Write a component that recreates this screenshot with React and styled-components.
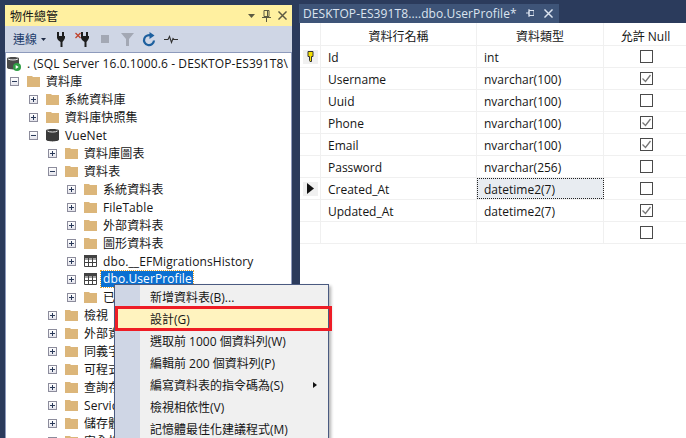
import React from "react";
import styled, { createGlobalStyle } from "styled-components";

const Global = createGlobalStyle`
  html, body { margin: 0; padding: 0; background: #2b3b5c; }
  body { font-family: "Open Sans", "Noto Sans CJK TC", sans-serif; color: #151515; }
  svg { flex: none; }
`;

const Screen = styled.div`
  width: 686px;
  height: 438px;
  display: flex;
  overflow: hidden;
  background: #2b3b5c;
`;

const LeftPanel = styled.div`
  position: relative;
  width: 287px;
  margin: 5px 0 0 5px;
  display: flex;
  flex-direction: column;
`;

const TitleBar = styled.div`
  height: 21px;
  background: #fff0a0;
  display: flex;
  align-items: center;
  padding-left: 5px;
  font-size: 12px;
`;

const TitleIcons = styled.div`
  margin-left: auto;
  display: flex;
  align-items: center;
  gap: 7px;
  padding-right: 5px;
`;

const Toolbar = styled.div`
  height: 26px;
  background: #cfd6e5;
  display: flex;
  align-items: center;
  padding-left: 8px;
  font-size: 12px;
`;

const ToolLabel = styled.span`
  color: #1c3a6b;
  margin-right: 4px;
`;

const ToolIcon = styled.svg`
  flex: none;
  margin-left: ${(p) => p.$gap}px;
`;

const Tree = styled.div`
  flex: 1;
  min-height: 0;
  background: #fff;
  border: 1px solid #8e9bbc;
  border-bottom: none;
  padding-top: 1px;
  overflow: hidden;
`;

const Row = styled.div`
  height: 18px;
  display: flex;
  align-items: center;
  padding-left: ${(p) => 4 + 19 * p.$level}px;
  white-space: nowrap;
`;

const RootRow = styled(Row)`
  padding-left: 1px;
`;

const Expander = styled.span`
  width: 9px;
  height: 9px;
  flex: none;
  box-sizing: border-box;
  border: 1px solid #8c8c9c;
  background: linear-gradient(#fff, #e4e4ec);
  margin-right: 8px;
  position: relative;
  &::before {
    content: "";
    position: absolute;
    left: 1px;
    right: 1px;
    top: 3px;
    height: 1px;
    background: #2a3a5a;
  }
  &::after {
    content: "";
    display: ${(p) => (p.$open ? "none" : "block")};
    position: absolute;
    top: 1px;
    bottom: 1px;
    left: 3px;
    width: 1px;
    background: #2a3a5a;
  }
`;

const Label = styled.span`
  font-size: 12px;
  letter-spacing: 0.1px;
  margin: 2px 0 0 5px;
  line-height: 16px;
  padding: 0 1px;
  ${(p) =>
    p.$selected &&
    `
    background: #0a70d2;
    color: #fff;
    outline: 1px dotted #e0a030;
    margin: 0 0 0 4px;
    padding: 0 1px 0 2px;
  `}
`;

const RootLabel = styled.span`
  font-size: 12px;
  letter-spacing: 0.1px;
  margin-left: 6px;
`;

const Editor = styled.div`
  flex: 1;
  margin-left: 7px;
  display: flex;
  flex-direction: column;
  min-width: 0;
`;

const TabStrip = styled.div`
  height: 19px;
  padding-top: 4px;
  display: flex;
`;

const Tab = styled.div`
  width: 260px;
  box-sizing: border-box;
  background: #3e5478;
  color: #dce4f0;
  font-size: 12px;
  letter-spacing: 0.1px;
  display: flex;
  align-items: center;
  padding-left: 4px;
  white-space: nowrap;
`;

const TabIcons = styled.div`
  margin-left: auto;
  display: flex;
  align-items: center;
  gap: 10px;
  padding-right: 6px;
`;

const Sheet = styled.div`
  flex: 1;
  background: #fff;
  margin-left: 1px;
`;

const GridRow = styled.div`
  display: grid;
  grid-template-columns: 21px 156px 127px 83px;
  height: ${(p) => (p.$head ? 23 : 22)}px;
  box-sizing: border-box;
  border-bottom: 1px solid #f0f0f0;
`;

const Cell = styled.div`
  border-right: 1px solid #f0f0f0;
  padding: 2px 0 0 7px;
  font-size: 12px;
  display: flex;
  align-items: center;
  white-space: nowrap;
`;

const HeadCell = styled(Cell)`
  justify-content: center;
  padding: 4px 0 0;
  border-right: ${(p) => (p.$last ? "none" : "1px solid #f0f0f0")};
`;

const ActiveCell = styled(Cell)`
  background: #e8ecf1;
  outline: 1px dotted #222;
  outline-offset: -1px;
`;

const MarkerCell = styled(Cell)`
  padding: 0;
  justify-content: center;
`;

const Marker = styled.span`
  width: 15px;
  height: 14px;
  background: #f0f0f0;
  display: flex;
  align-items: center;
  justify-content: center;
`;

const CheckCell = styled(Cell)`
  padding: 0 0 0 36px;
  border-right: none;
`;

const Check = styled.span`
  width: 13px;
  height: 13px;
  box-sizing: border-box;
  border: 1px solid #4a4a4a;
  display: flex;
  background: #fff;
`;

const Menu = styled.div`
  position: absolute;
  left: 109px;
  top: 279px;
  width: 215px;
  height: 160px;
  box-sizing: border-box;
  padding-top: 1px;
  background: #f0f0f0 linear-gradient(#cfd6e5, #cfd6e5) no-repeat 0 0 / 25px 100%;
  border: 1px solid #4a5a80;
  box-shadow: 2px 2px 3px rgba(0, 0, 0, 0.3);
`;

const MenuItem = styled.div`
  position: relative;
  height: 22px;
  display: flex;
  align-items: center;
  padding-left: 35px;
  font-size: 12px;
  white-space: nowrap;
  ${(p) =>
    p.$active &&
    `
    background: #fff3bf;
    &::after {
      content: "";
      position: absolute;
      left: 0;
      right: -4px;
      top: -2px;
      bottom: -1px;
      border: 3px solid #ee1c25;
    }
  `}
`;

const SubArrow = styled.span`
  position: absolute;
  right: 11px;
  top: 8px;
  border-left: 4px solid #111;
  border-top: 3.5px solid transparent;
  border-bottom: 3.5px solid transparent;
`;

const FolderIcon = () => (
  <svg width="13" height="12" viewBox="0 0 13 12">
    <path d="M0 1h5l1 1h7v10H0z" fill="#dcb67a" />
  </svg>
);

const TableIcon = () => (
  <svg width="13" height="12" viewBox="0 0 13 12">
    <path d="M0.5 0.5h12v11H0.5zM0.5 4h12M0.5 7.5h12M4.5 0.5v11M8.5 0.5v11" fill="#fff" stroke="#424242" />
    <path d="M0 0h13v3H0z" fill="#424242" />
  </svg>
);

const DbIcon = () => (
  <svg width="13" height="14" viewBox="0 0 13 14">
    <path d="M0 2.5C0 .5 13 .5 13 2.5v9c0 2.5-13 2.5-13 0z" fill="#3a3a3a" />
    <path d="M1.5 3C3 4.4 10 4.4 11.5 3" stroke="#e8e8e8" fill="none" />
  </svg>
);

const ServerIcon = () => (
  <svg width="14" height="15" viewBox="0 0 14 15">
    <path d="M0 2.5C0 .5 12 .5 12 2.5v9c0 2.5-12 2.5-12 0z" fill="#4a4a4a" />
    <path d="M1 3c2 1.3 8 1.3 10 0" stroke="#eee" fill="none" />
    <circle cx="10" cy="11" r="4" fill="#2f9e44" />
    <path d="M8.7 9v4l3-2z" fill="#fff" />
  </svg>
);

const Plug = ({ gap, x }) => (
  <ToolIcon $gap={gap} width={x ? 15 : 9} height="15" viewBox={x ? "0 0 15 15" : "6 0 9 15"}>
    {x && <path d="M0.5 1l5 5M5.5 1l-5 5" stroke="#c0432c" strokeWidth="1.3" />}
    <path d="M7 0h2v4h3V0h2v4h1v2l-1 2-1.5 2v5h-2v-5L8 8 7 6V4z" fill="#1e1e1e" transform="translate(-1 0)" />
  </ToolIcon>
);

const Pin = ({ color }) => (
  <svg width="9" height="12" viewBox="0 0 9 12">
    <path d="M2 .5h5v6H2zM5.5 1v5.500M0 7.500h9M4.500 7.500V12" stroke={color} fill="none" />
  </svg>
);

const Close = ({ color, size }) => (
  <svg width={size} height={size} viewBox="0 0 10 10">
    <path d="M.5.5l9 9M9.500.5l-9 9" stroke={color} strokeWidth="1.6" />
  </svg>
);

const treeRows = [
  { level: 0, open: true, icon: "folder", text: "資料庫" },
  { level: 1, icon: "folder", text: "系統資料庫" },
  { level: 1, icon: "folder", text: "資料庫快照集" },
  { level: 1, open: true, icon: "db", text: "VueNet" },
  { level: 2, icon: "folder", text: "資料庫圖表" },
  { level: 2, open: true, icon: "folder", text: "資料表" },
  { level: 3, icon: "folder", text: "系統資料表" },
  { level: 3, icon: "folder", text: "FileTable" },
  { level: 3, icon: "folder", text: "外部資料表" },
  { level: 3, icon: "folder", text: "圖形資料表" },
  { level: 3, icon: "table", text: "dbo.__EFMigrationsHistory" },
  { level: 3, icon: "table", text: "dbo.UserProfile", selected: true },
  { level: 3, icon: "folder", text: "已卸除的資料表" },
  { level: 2, icon: "folder", text: "檢視" },
  { level: 2, icon: "folder", text: "外部資源" },
  { level: 2, icon: "folder", text: "同義字" },
  { level: 2, icon: "folder", text: "可程式性" },
  { level: 2, icon: "folder", text: "查詢存放區" },
  { level: 2, icon: "folder", text: "Service Broker" },
  { level: 2, icon: "folder", text: "儲存體" },
  { level: 2, icon: "folder", text: "安全性" },
];

const columns = [
  { name: "Id", type: "int", key: true },
  { name: "Username", type: "nvarchar(100)", nullable: true },
  { name: "Uuid", type: "nvarchar(100)" },
  { name: "Phone", type: "nvarchar(100)", nullable: true },
  { name: "Email", type: "nvarchar(100)", nullable: true },
  { name: "Password", type: "nvarchar(256)" },
  { name: "Created_At", type: "datetime2(7)", current: true },
  { name: "Updated_At", type: "datetime2(7)", nullable: true },
  { name: "", type: "" },
];

const menuItems = [
  { text: "新增資料表(B)..." },
  { text: "設計(G)", active: true },
  { text: "選取前 1000 個資料列(W)" },
  { text: "編輯前 200 個資料列(P)" },
  { text: "編寫資料表的指令碼為(S)", sub: true },
  { text: "檢視相依性(V)" },
  { text: "記憶體最佳化建議程式(M)" },
];

const rowIcons = { folder: FolderIcon, table: TableIcon, db: DbIcon };

export default function App() {
  return (
    <Screen>
      <Global />
      <LeftPanel>
        <TitleBar>
          物件總管
          <TitleIcons>
            <svg width="7" height="4" viewBox="0 0 7 4">
              <path d="M0 0h7L3.500 4z" fill="#5c5a42" />
            </svg>
            <Pin color="#5c5a42" />
            <Close color="#5c5a42" size={9} />
          </TitleIcons>
        </TitleBar>
        <Toolbar>
          <ToolLabel>連線</ToolLabel>
          <svg width="5" height="3" viewBox="0 0 5 3">
            <path d="M0 0h5L2.500 3z" fill="#1e2a44" />
          </svg>
          <Plug gap={11} />
          <Plug gap={9} x />
          <ToolIcon $gap={11} width="8" height="8" viewBox="0 0 8 8">
            <rect width="8" height="8" fill="#a3a8b4" />
          </ToolIcon>
          <ToolIcon $gap={12} width="13" height="13" viewBox="0 0 13 13">
            <path d="M0 0h13L8 6v7H5V6z" fill="#a3a8b4" />
          </ToolIcon>
          <ToolIcon $gap={8} width="14" height="15" viewBox="0 0 14 15">
            <path d="M9.500 3.800A5 5 0 1 0 12 8.500" fill="none" stroke="#1c5f9e" strokeWidth="2.200" />
            <path d="M7.500 0v7l5-3.500z" fill="#1c5f9e" />
          </ToolIcon>
          <ToolIcon $gap={8} width="14" height="9" viewBox="0 0 14 9">
            <path d="M0 4.500h4l1.500-3 2 6 1.500-4 1 1h4" fill="none" stroke="#333" strokeWidth="1.100" />
          </ToolIcon>
        </Toolbar>
        <Tree>
          <RootRow $level={0}>
            <ServerIcon />
            <RootLabel>. (SQL Server 16.0.1000.6 - DESKTOP-ES391T8\</RootLabel>
          </RootRow>
          {treeRows.map((row) => {
            const Icon = rowIcons[row.icon];
            return (
              <Row key={row.text} $level={row.level}>
                <Expander $open={row.open} />
                <Icon />
                <Label $selected={row.selected}>{row.text}</Label>
              </Row>
            );
          })}
        </Tree>
        <Menu>
          {menuItems.map((item) => (
            <MenuItem key={item.text} $active={item.active}>
              {item.text}
              {item.sub && <SubArrow />}
            </MenuItem>
          ))}
        </Menu>
      </LeftPanel>
      <Editor>
        <TabStrip>
          <Tab>
            DESKTOP-ES391T8....dbo.UserProfile*
            <TabIcons>
              <svg width="8" height="9" viewBox="0 0 8 9">
                <path d="M3 1.500h5v5H3zM3 0v8M0 4h3" stroke="#dce4f0" fill="none" />
              </svg>
              <Close color="#dce4f0" size={9} />
            </TabIcons>
          </Tab>
        </TabStrip>
        <Sheet>
          <GridRow $head>
            <HeadCell />
            <HeadCell>資料行名稱</HeadCell>
            <HeadCell>資料類型</HeadCell>
            <HeadCell $last>允許 Null</HeadCell>
          </GridRow>
          {columns.map((col, i) => {
            const TypeCell = col.current ? ActiveCell : Cell;
            return (
              <GridRow key={i}>
                <MarkerCell>
                  {col.key && (
                    <Marker>
                      <svg width="7" height="12" viewBox="0 0 7 12">
                        <path d="M1 .5h5v5H4.500v5H3L2.500 9.500V5.500H1z" fill="#f5e000" stroke="#333" />
                      </svg>
                    </Marker>
                  )}
                  {col.current && (
                    <Marker>
                      <svg width="7" height="11" viewBox="0 0 7 11">
                        <path d="M0 0l7 5.500L0 11z" fill="#111" />
                      </svg>
                    </Marker>
                  )}
                </MarkerCell>
                <Cell>{col.name}</Cell>
                <TypeCell>{col.type}</TypeCell>
                <CheckCell>
                  <Check>
                    {col.nullable && (
                      <svg width="11" height="11" viewBox="0 0 11 11">
                        <path d="M1.500 5.500l3 3 5-6.500" fill="none" stroke="#777" strokeWidth="1.300" />
                      </svg>
                    )}
                  </Check>
                </CheckCell>
              </GridRow>
            );
          })}
        </Sheet>
      </Editor>
    </Screen>
  );
}
